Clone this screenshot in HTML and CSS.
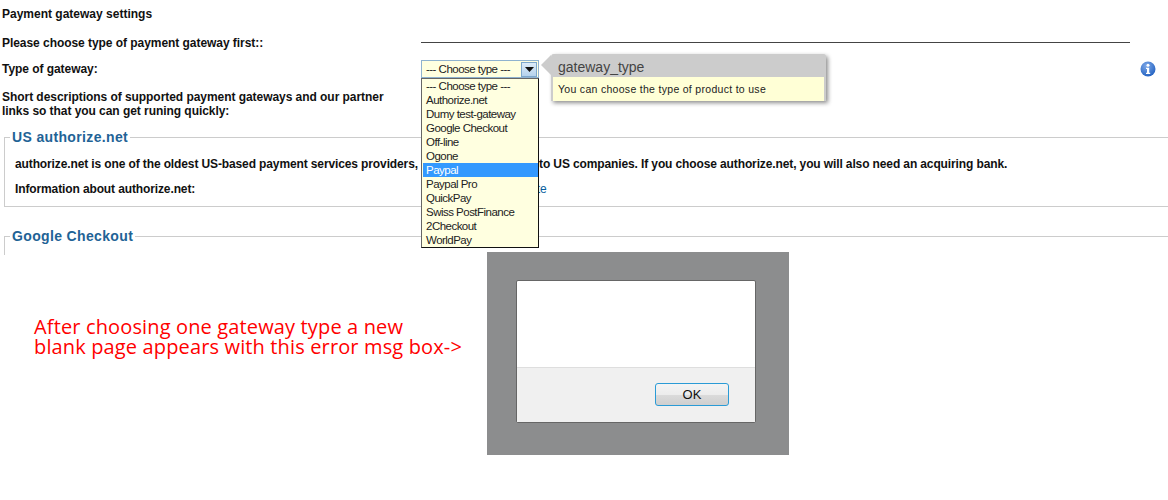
FILE: index.html
```html
<!DOCTYPE html>
<html lang="en">
<head>
<meta charset="utf-8">
<title>Payment gateway settings</title>
<link rel="stylesheet" href="styles.css">
</head>
<body>
<main class="page">
  <h1 class="title">Payment gateway settings</h1>
  <div class="row row-first">
    <label class="label">Please choose type of payment gateway first::</label>
    <div class="rule"></div>
  </div>
  <div class="row row-type">
    <label class="label">Type of gateway:</label>
    <div class="control">
      <div class="select">
        <span class="select-value">--- Choose type ---</span>
        <span class="select-btn"><svg width="9" height="5" viewBox="0 0 9 5"><path d="M0 0h9L4.500 5z" fill="#111"/></svg></span>
      </div>
      <ul class="options">
        <li>--- Choose type ---</li>
        <li>Authorize.net</li>
        <li>Dumy test-gateway</li>
        <li>Google Checkout</li>
        <li>Off-line</li>
        <li>Ogone</li>
        <li class="selected">Paypal</li>
        <li>Paypal Pro</li>
        <li>QuickPay</li>
        <li>Swiss PostFinance</li>
        <li>2Checkout</li>
        <li>WorldPay</li>
      </ul>
      <div class="tip">
        <span class="tip-arrow"></span>
        <div class="tip-title">gateway_type</div>
        <div class="tip-body">You can choose the type of product to use</div>
      </div>
    </div>
    <svg class="info" width="16" height="16" viewBox="0 0 16 16">
      <defs><radialGradient id="ig" cx="40%" cy="30%" r="75%"><stop offset="0" stop-color="#7fa9e8"/><stop offset="1" stop-color="#1f5fc0"/></radialGradient></defs>
      <circle cx="8" cy="8" r="7.500" fill="url(#ig)"/>
      <circle cx="8" cy="4.300" r="1.500" fill="#fff"/>
      <path d="M6 6.700h3.200v5h1v1.300H6v-1.300h1v-3.700H6z" fill="#fff"/>
    </svg>
  </div>
  <p class="label intro">Short descriptions of supported payment gateways and our partner<br>links so that you can get runing quickly:</p>
  <fieldset class="group group-first">
    <legend class="legend">US authorize.net</legend>
    <p class="desc">authorize.net is one of the oldest US-based payment services providers, and it is offered only to US companies. If you choose authorize.net, you will also need an acquiring bank.</p>
    <div class="info-row">
      <span class="desc-label">Information about authorize.net:</span>
      <a class="link" href="#">Authorize.net website</a>
    </div>
  </fieldset>
  <fieldset class="group group-second">
    <legend class="legend">Google Checkout</legend>
  </fieldset>
  <section class="error-row">
    <p class="note">After choosing one gateway type a new<br>blank page appears with this error msg box-&gt;</p>
    <div class="backdrop">
      <div class="dialog">
        <div class="dialog-body"></div>
        <div class="dialog-foot"><button class="ok" type="button">OK</button></div>
      </div>
    </div>
  </section>
</main>
</body>
</html>
```
FILE: styles.css
```css
html, body {
  margin: 0;
  height: 500px;
  overflow: hidden;
  background: #fff;
}
.page {
  font-family: "Liberation Sans", Arial, sans-serif;
  font-size: 12px;
  line-height: 14px;
  color: #111;
  padding: 7px 0 0 2px;
}
.title {
  margin: 0;
  font-size: 12px;
  line-height: 14px;
  font-weight: bold;
}
.label {
  font-weight: bold;
  letter-spacing: -0.05px;
}
.row {
  display: grid;
  grid-template-columns: 419px 709px 1fr;
  align-items: center;
}
.row-first {
  margin-top: 15px;
}
.rule {
  height: 1px;
  margin-bottom: 2px;
  background: #444;
}
.row-type {
  margin-top: 10px;
  height: 18px;
}
.control {
  position: relative;
  height: 18px;
}
.select {
  width: 118px;
  height: 18px;
  box-sizing: border-box;
  border: 1px solid #8fb2cf;
  background: #ffffe0;
  display: flex;
  align-items: center;
  justify-content: space-between;
  font-size: 11.500px;
  letter-spacing: -0.520px;
  color: #222;
}
.select-value {
  padding-left: 4px;
}
.select-btn {
  width: 16px;
  height: 15px;
  margin-right: 1px;
  box-sizing: border-box;
  border: 1px solid #7da7cc;
  background: linear-gradient(#dcebf8, #b5d2ec);
  display: flex;
  align-items: center;
  justify-content: center;
}
.options {
  position: absolute;
  left: 0;
  top: 18px;
  z-index: 3;
  width: 118px;
  box-sizing: border-box;
  margin: 0;
  padding: 0 0 0 1px;
  list-style: none;
  background: #ffffe0;
  border: 1px solid #111;
  border-top-color: #666;
  border-left-color: #666;
  font-size: 11.500px;
  letter-spacing: -0.520px;
  color: #222;
}
.options li {
  height: 14px;
  line-height: 14px;
  padding-left: 3px;
}
.options .selected {
  background: #3399ff;
  color: #fff;
}
.tip {
  position: absolute;
  left: 130px;
  top: -6px;
  z-index: 3;
  width: 275px;
  box-sizing: border-box;
  border: 0 solid #ccc;
  border-width: 0 2px;
  border-radius: 3px 3px 0 0;
  background: #ccc;
  box-shadow: 2px 2px 4px rgba(0, 0, 0, 0.45);
}
.tip-arrow {
  position: absolute;
  left: -12px;
  top: 1px;
  border: 10px solid transparent;
  border-left: 0;
  border-right: 10px solid #ccc;
}
.tip-title {
  height: 23px;
  line-height: 27px;
  padding-left: 5px;
  font-size: 14px;
  color: #444;
}
.tip-body {
  height: 24px;
  line-height: 24px;
  padding-left: 5px;
  background: #ffffd6;
  font-size: 10.500px;
  letter-spacing: 0.300px;
  color: #222;
}
.info {
  margin-left: 10px;
}
.intro {
  margin: 12px 0 0;
  line-height: 14px;
}
.group {
  margin: 0;
  padding: 0;
  border: 0 solid #ccc;
  box-sizing: border-box;
  position: relative;
  left: 2px;
}
.group-first {
  margin-top: 11px;
  height: 78px;
  border-width: 1px 0 1px 1px;
}
.group-second {
  margin-top: 21px;
  height: 27px;
  border-width: 1px 0 0 1px;
}
.legend {
  margin-left: 5px;
  padding: 0 2px;
  font-size: 14px;
  line-height: 16px;
  font-weight: bold;
  letter-spacing: 0.350px;
  color: #1f6396;
}
.desc {
  margin: 12px 0 0 10px;
  font-weight: bold;
  letter-spacing: -0.120px;
  white-space: nowrap;
}
.info-row {
  margin: 11px 0 0 10px;
  display: grid;
  grid-template-columns: 417px 1fr;
}
.desc-label {
  font-weight: bold;
  letter-spacing: -0.120px;
}
.link {
  color: #0a5f9e;
  text-decoration: none;
}
.error-row {
  margin-top: -3px;
  display: grid;
  grid-template-columns: 485px 302px;
}
.note {
  margin: 65px 0 0 32px;
  font-family: "Open Sans", sans-serif;
  font-size: 20px;
  line-height: 20px;
  letter-spacing: 0.140px;
  color: #f00;
  white-space: nowrap;
}
.backdrop {
  height: 203px;
  box-sizing: border-box;
  padding: 28px 33px 32px 29px;
  background: #8c8d8e;
}
.dialog {
  height: 143px;
  box-sizing: border-box;
  display: flex;
  flex-direction: column;
  background: #fff;
  border: 1px solid #666;
  border-radius: 2px;
}
.dialog-body {
  height: 86px;
  border-bottom: 1px solid #dedede;
}
.dialog-foot {
  flex: 1;
  background: #f0f0f0;
  display: flex;
  justify-content: flex-end;
  align-items: flex-start;
  padding: 15px 26px 0 0;
}
.ok {
  width: 74px;
  height: 23px;
  padding: 0;
  border: 1px solid #2a9bd6;
  border-radius: 3px;
  background: linear-gradient(#f4f4f4 0, #ececec 50%, #dbdbdb 50%, #cfcfcf 100%);
  font-family: "Liberation Sans", Arial, sans-serif;
  font-size: 13px;
  color: #111;
}
```
